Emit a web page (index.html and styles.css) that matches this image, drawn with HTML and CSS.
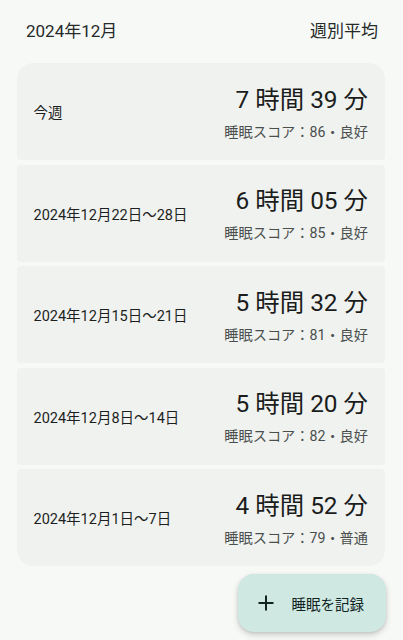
FILE: index.html
```html
<!DOCTYPE html>
<html lang="ja">
<head>
<meta charset="utf-8">
<link rel="stylesheet" href="styles.css">
</head>
<body>
<div class="screen">
  <header class="topbar">
    <span class="month">2024年12月</span>
    <span class="mode">週別平均</span>
  </header>
  <main class="list">
    <section class="card first">
      <div class="label">今週</div>
      <div class="stats">
        <div class="time">7 時間 39 分</div>
        <div class="score">睡眠スコア：86・良好</div>
      </div>
    </section>
    <section class="card">
      <div class="label">2024年12月22日〜28日</div>
      <div class="stats">
        <div class="time">6 時間 05 分</div>
        <div class="score">睡眠スコア：85・良好</div>
      </div>
    </section>
    <section class="card">
      <div class="label">2024年12月15日〜21日</div>
      <div class="stats">
        <div class="time">5 時間 32 分</div>
        <div class="score">睡眠スコア：81・良好</div>
      </div>
    </section>
    <section class="card">
      <div class="label">2024年12月8日〜14日</div>
      <div class="stats">
        <div class="time">5 時間 20 分</div>
        <div class="score">睡眠スコア：82・良好</div>
      </div>
    </section>
    <section class="card last">
      <div class="label">2024年12月1日〜7日</div>
      <div class="stats">
        <div class="time">4 時間 52 分</div>
        <div class="score">睡眠スコア：79・普通</div>
      </div>
    </section>
  </main>
  <button class="fab">
    <svg class="fab-icon" width="24" height="24" viewBox="0 0 24 24"><path d="M12 4.5v15M4.5 12h15" stroke="#10231f" stroke-width="2" fill="none"/></svg>
    <span class="fab-text">睡眠を記録</span>
  </button>
</div>
</body>
</html>
```
FILE: styles.css
```css
html, body {
  margin: 0;
  padding: 0;
}
body {
  background: #f7f9f7;
  font-family: Roboto, "Noto Sans CJK JP", sans-serif;
  color: #1b1d1c;
}
.screen {
  position: relative;
  width: 403px;
  height: 640px;
  overflow: hidden;
}
.topbar {
  display: flex;
  justify-content: space-between;
  align-items: center;
  height: 58px;
  padding: 0 25px 0 26px;
  color: #262a28;
}
.month {
  font-size: 17px;
}
.mode {
  font-size: 17px;
}
.list {
  display: flex;
  flex-direction: column;
  gap: 4.5px;
  margin: 5px 18px 0 17px;
}
.card {
  height: 97px;
  box-sizing: border-box;
  background: #f0f2f0;
  border-radius: 4px;
  display: flex;
  align-items: center;
  justify-content: space-between;
  padding: 0 17px 0 16.5px;
}
.card.first {
  border-radius: 16px 16px 4px 4px;
}
.card.last {
  border-radius: 4px 4px 16px 16px;
}
.label {
  font-size: 14.5px;
  color: #1d1f1e;
}
.stats {
  display: flex;
  flex-direction: column;
  align-items: flex-end;
  padding-top: 2px;
}
.time {
  font-size: 24.4px;
  line-height: 32px;
  color: #1b1d1c;
}
.score {
  font-size: 14.2px;
  line-height: 20px;
  margin-top: 6px;
  color: #4a4f4d;
}
.fab {
  position: absolute;
  right: 17px;
  bottom: 8px;
  height: 58px;
  display: flex;
  align-items: center;
  gap: 14px;
  padding: 0 22px 0 16px;
  border: none;
  border-radius: 16px;
  background: #cfe8e2;
  box-shadow: 0 3px 6px rgba(0,0,0,0.16), 0 1px 3px rgba(0,0,0,0.1);
  font-family: Roboto, "Noto Sans CJK JP", sans-serif;
}
.fab-icon {
  display: block;
}
.fab-text {
  font-size: 14.5px;
  color: #10231f;
}
```
